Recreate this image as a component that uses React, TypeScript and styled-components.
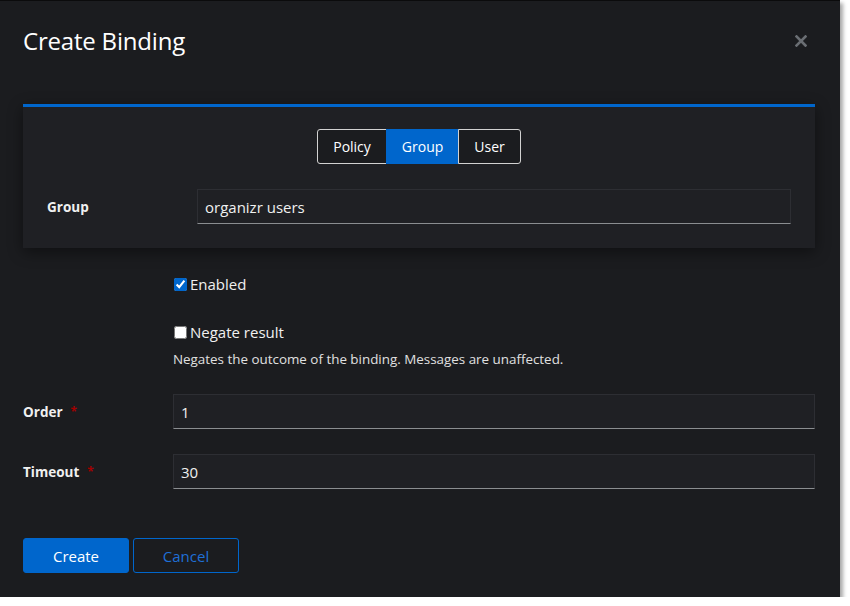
import React from 'react'
import styled, { createGlobalStyle } from 'styled-components'

const Global = createGlobalStyle`
  html, body {
    margin: 0;
    padding: 0;
    background: #ffffff;
  }
  body {
    font-family: "Open Sans", "Noto Sans", sans-serif;
  }
`

const Modal = styled.div`
  box-sizing: border-box;
  width: 840px;
  height: 597px;
  background: #1b1c1f;
  border-top: 1px solid #0b0b0c;
  box-shadow: 3px 3px 4px rgba(0, 0, 0, 0.35);
  padding: 0 25px 0 23px;
  display: flex;
  flex-direction: column;
  color: #f0f0f0;
`

const Header = styled.header`
  height: 80px;
  display: flex;
  align-items: center;
  justify-content: space-between;
`

const Title = styled.h1`
  margin: 0;
  font-size: 24px;
  font-weight: 500;
  letter-spacing: -0.2px;
  color: #ffffff;
  line-height: 1;
`

const Close = styled.button`
  background: none;
  border: none;
  padding: 0;
  margin-right: 7px;
  width: 14px;
  height: 14px;
  display: flex;
  align-items: center;
  justify-content: center;
  cursor: pointer;
`

const Card = styled.section`
  margin-top: 23px;
  background: #1f2024;
  border-top: 3px solid #0066cc;
  box-shadow: 0 4px 14px rgba(0, 0, 0, 0.45);
  padding: 22px 24px 24px 24px;
  display: flex;
  flex-direction: column;
  gap: 25px;
`

const ToggleGroup = styled.div`
  display: flex;
  justify-content: center;
`

const Toggle = styled.button<{ $active?: boolean; $pos: 'first' | 'mid' | 'last' }>`
  height: 35px;
  padding: 0 15px;
  font-family: inherit;
  font-size: 14px;
  color: #ffffff;
  background: ${p => (p.$active ? '#0066cc' : '#1b1c1f')};
  border: 1px solid ${p => (p.$active ? '#0066cc' : '#d2d2d2')};
  border-radius: ${p =>
    p.$pos === 'first' ? '3px 0 0 3px' : p.$pos === 'last' ? '0 3px 3px 0' : '0'};
  margin-left: ${p => (p.$pos === 'first' ? '0' : '-1px')};
  cursor: pointer;
`

const Row = styled.div`
  display: grid;
  grid-template-columns: 150px 1fr;
  align-items: center;
`

const Label = styled.label`
  font-size: 13.5px;
  font-weight: 700;
  color: #f0f0f0;
  display: flex;
  gap: 8px;
`

const Required = styled.span`
  color: #a30000;
  font-weight: 700;
  font-size: 12px;
`

const Input = styled.input`
  box-sizing: border-box;
  height: 35px;
  width: 100%;
  background: #1f2024;
  border: 1px solid #2d2e33;
  border-bottom-color: #8a8d90;
  color: #f0f0f0;
  font-family: inherit;
  font-size: 15px;
  padding: 0 7px;
  outline: none;
`

const Body = styled.div`
  display: flex;
  flex-direction: column;
`

const CheckRow = styled.div<{ $top: number }>`
  margin-top: ${p => p.$top}px;
  margin-left: 150px;
  display: flex;
  flex-direction: column;
  gap: 8px;
`

const CheckLabel = styled.label`
  display: flex;
  align-items: center;
  gap: 2px;
  font-size: 15px;
  color: #f0f0f0;
  input {
    margin: 0 1px 0 1px;
    width: 13px;
    height: 13px;
    accent-color: #0066cc;
  }
`

const Helper = styled.div`
  font-size: 13.4px;
  color: #e0e0e0;
`

const FieldRow = styled(Row)<{ $top: number }>`
  margin-top: ${p => p.$top}px;
`

const Footer = styled.footer`
  margin-top: 49px;
  display: flex;
  gap: 4px;
`

const Button = styled.button<{ $variant: 'primary' | 'secondary' }>`
  width: 106px;
  height: 35px;
  border-radius: 3px;
  font-family: inherit;
  font-size: 15px;
  cursor: pointer;
  background: ${p => (p.$variant === 'primary' ? '#0066cc' : 'transparent')};
  color: ${p => (p.$variant === 'primary' ? '#ffffff' : '#1f6fd6')};
  border: 1px solid #0066cc;
`

export default function App() {
  return (
    <>
      <Global />
      <Modal>
        <Header>
          <Title>Create Binding</Title>
          <Close aria-label="Close">
            <svg width="12" height="12" viewBox="0 0 12 12">
              <path d="M1.5 1.5 L10.5 10.5 M10.5 1.5 L1.5 10.5" stroke="#6a6e73" strokeWidth="2.6" strokeLinecap="square" />
            </svg>
          </Close>
        </Header>
        <Card>
          <ToggleGroup>
            <Toggle $pos="first">Policy</Toggle>
            <Toggle $pos="mid" $active>Group</Toggle>
            <Toggle $pos="last">User</Toggle>
          </ToggleGroup>
          <Row>
            <Label>Group</Label>
            <Input defaultValue="organizr users" />
          </Row>
        </Card>
        <Body>
          <CheckRow $top={26}>
            <CheckLabel>
              <input type="checkbox" defaultChecked />
              Enabled
            </CheckLabel>
          </CheckRow>
          <CheckRow $top={28}>
            <CheckLabel>
              <input type="checkbox" />
              Negate result
            </CheckLabel>
            <Helper>Negates the outcome of the binding. Messages are unaffected.</Helper>
          </CheckRow>
          <FieldRow $top={26}>
            <Label>
              Order <Required>*</Required>
            </Label>
            <Input defaultValue="1" />
          </FieldRow>
          <FieldRow $top={25}>
            <Label>
              Timeout <Required>*</Required>
            </Label>
            <Input defaultValue="30" />
          </FieldRow>
        </Body>
        <Footer>
          <Button $variant="primary">Create</Button>
          <Button $variant="secondary">Cancel</Button>
        </Footer>
      </Modal>
    </>
  )
}
